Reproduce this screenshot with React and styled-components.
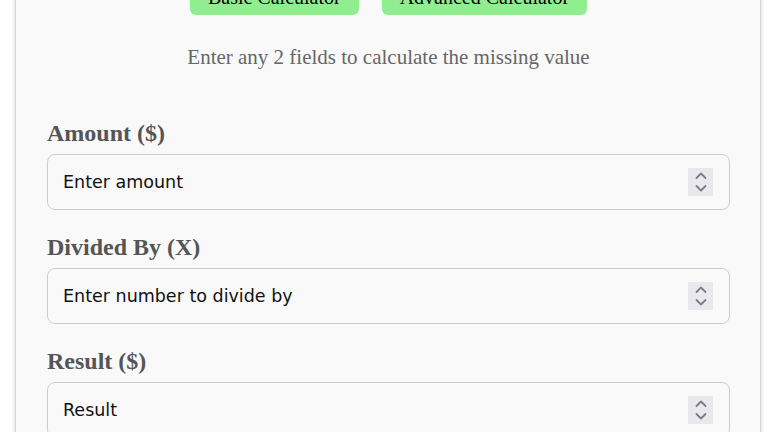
import styled, { createGlobalStyle } from "styled-components";

const GlobalStyle = createGlobalStyle`
  html, body {
    margin: 0;
    background: #fff;
    overflow: hidden;
  }
`;

const fields = [
  { label: "Amount ($)", placeholder: "Enter amount" },
  { label: "Divided By (X)", placeholder: "Enter number to divide by" },
  { label: "Result ($)", placeholder: "Result" },
];

const Spinner = () => (
  <$Spinner>
    <svg width="12" height="22" viewBox="0 0 12 22" fill="none">
      <path d="M1.5 7 L6 2.5 L10.5 7" stroke="#7c7c88" strokeWidth="1.8" strokeLinecap="round" strokeLinejoin="round" />
      <path d="M1.5 15 L6 19.5 L10.5 15" stroke="#7c7c88" strokeWidth="1.8" strokeLinecap="round" strokeLinejoin="round" />
    </svg>
  </$Spinner>
);

const App = () => {
  return (
    <>
      <GlobalStyle />
      <$Page>
        <$Card>
          <$Tabs>
            <$TabButton>Basic Calculator</$TabButton>
            <$TabButton>Advanced Calculator</$TabButton>
          </$Tabs>
          <$Hint>Enter any 2 fields to calculate the missing value</$Hint>
          {fields.map(({ label, placeholder }, i) => (
            <$Field key={i}>
              <$Label>{label}</$Label>
              <$InputBox>
                <$Input type="text" inputMode="decimal" placeholder={placeholder} />
                <Spinner />
              </$InputBox>
            </$Field>
          ))}
        </$Card>
      </$Page>
    </>
  );
};

export default App;

const $Page = styled.div`
  display: flex;
  padding-left: 16px;
  height: 432px;
  overflow: hidden;
`;

const $Card = styled.div`
  width: 744px;
  box-sizing: border-box;
  margin-top: -23px;
  padding: 0 30px 0 31px;
  background-color: #f9f9f9;
  box-shadow: 0 0 0 1px #d4d4d4, 0 0 4px 1px rgba(0, 0, 0, 0.18);
  font-family: "Liberation Serif", "Times New Roman", serif;
`;

const $Tabs = styled.div`
  display: flex;
  justify-content: center;
  gap: 23px;
`;

const $TabButton = styled.button`
  font-family: "Liberation Serif", "Times New Roman", serif;
  font-size: 20px;
  line-height: 23px;
  color: #000;
  background-color: #90ee90;
  border: none;
  border-radius: 6px;
  padding: 9px 18px 6px;
`;

const $Hint = styled.p`
  margin: 30px 0 50px;
  text-align: center;
  font-size: 21px;
  line-height: 24px;
  color: #666;
`;

const $Field = styled.div`
  margin-bottom: 23px;
`;

const $Label = styled.label`
  display: block;
  margin-bottom: 7px;
  font-size: 24px;
  line-height: 28px;
  font-weight: bold;
  color: #555;
`;

const $InputBox = styled.div`
  display: flex;
  align-items: center;
  gap: 10px;
  height: 56px;
  box-sizing: border-box;
  padding: 0 16px 0 15px;
  border: 1px solid #ccc;
  border-radius: 8px;
  background-color: #f9f9f9;
`;

const $Input = styled.input`
  flex: 1;
  min-width: 0;
  border: none;
  outline: none;
  padding: 0;
  background: transparent;
  font-family: "DejaVu Sans", Verdana, sans-serif;
  font-size: 17.5px;
  color: #111;

  &::placeholder {
    color: #111;
    opacity: 1;
  }
`;

const $Spinner = styled.div`
  display: flex;
  align-items: center;
  justify-content: center;
  width: 25px;
  height: 28px;
  background-color: #e9e9ed;
`;
